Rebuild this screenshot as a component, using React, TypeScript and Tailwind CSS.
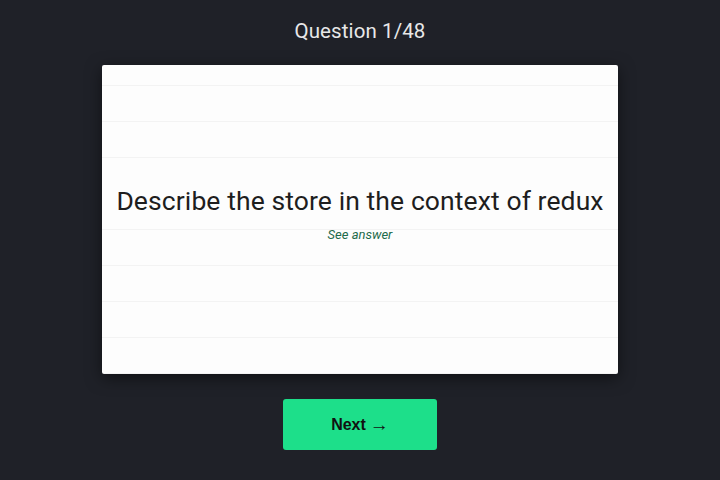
export default function App() {
  return (
    <div className="min-h-screen w-full bg-[#1f2128] flex flex-col items-center font-['Roboto',sans-serif]">
      <h1 className="mt-[19px] h-[24px] text-[20.5px] leading-[24px] text-[#e8e8e8] tracking-[0.1px]">
        Question 1/48
      </h1>
      <div className="mt-[22px] w-[516px] h-[309px] rounded-[2px] bg-[#fdfdfd] shadow-[0_4px_16px_rgba(0,0,0,0.5)] bg-[linear-gradient(to_bottom,transparent_35px,#f3f3f3_35px)] bg-[length:100%_36px] bg-[position:0_-15px] flex flex-col items-center justify-center">
        <p className="mt-[-12px] w-full bg-[#fdfdfd] text-center text-[26.5px] leading-[32px] text-[#1e1e1e] tracking-[0.1px]">
          Describe the store in the context of redux
        </p>
        <button
          type="button"
          className="mt-[10px] text-[13px] leading-[16px] italic text-[#1d6b4b]"
        >
          See answer
        </button>
      </div>
      <button
        type="button"
        className="mt-[25px] w-[154px] h-[51px] rounded-[3px] bg-[#1ddf8a] flex items-center justify-center gap-[4px] text-[16px] font-bold text-[#111111] font-['Liberation_Sans',sans-serif]"
      >
        <span>Next</span>
        <span className="text-[19px] leading-none font-['Liberation_Sans',sans-serif]">→</span>
      </button>
    </div>
  );
}
